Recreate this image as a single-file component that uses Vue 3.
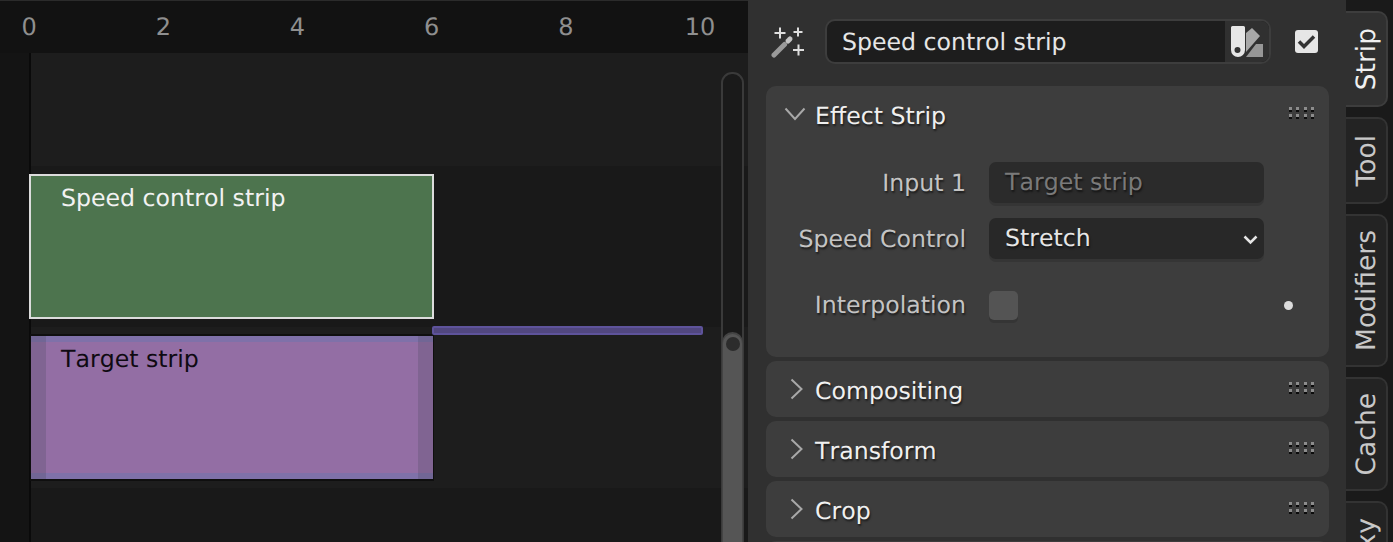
<template>
  <div class="app">
    <section class="timeline">
      <div class="ruler">
        <span v-for="n in ticks" :key="n" class="tick">{{ n }}</span>
      </div>
      <div class="body">
        <div class="gutter"></div>
        <div class="channels">
          <div class="band light first"></div>
          <div class="band dark"></div>
          <div class="band light"></div>
          <div class="band dark rest"></div>

          <div class="strip speed">Speed control strip</div>
          <div class="strip target">
            <i class="handle left"></i>
            <i class="handle right"></i>
            <span>Target strip</span>
          </div>
          <div class="retime"></div>
        </div>
        <div class="scroll">
          <div class="thumb"><i></i></div>
        </div>
      </div>
    </section>

    <section class="panel">
      <header class="head">
        <svg class="wand" width="34" height="34" viewBox="0 0 34 34">
          <path d="M3 30L13.500 19.500" stroke="#9a9a9a" stroke-width="5" stroke-linecap="round" />
          <path d="M17 16L19 14" stroke="#c4c4c4" stroke-width="5" stroke-linecap="round" />
          <path d="M3.500 8h11M9 2.500v11M22.500 7h9M27 2.500v9M22 25h11M27.500 19.500v11" stroke="#dedede" stroke-width="2" fill="none" />
        </svg>
        <div class="name">
          <span class="name-text">Speed control strip</span>
          <span class="name-btn">
            <svg width="33" height="33" viewBox="0 0 33 33">
              <path d="M0 2.500A1.500 1.500 0 0 1 1.500 1h11A1.500 1.500 0 0 1 14 2.500V25a7 7 0 0 1-14 0z" fill="#e6e6e6" />
              <circle cx="6.500" cy="25" r="3" fill="#333" />
              <path d="M15 8L21 3l8 8-7 8-7 8z" fill="#a8a8a8" />
              <path d="M25 19h7v13H15z" fill="#969696" />
            </svg>
          </span>
        </div>
        <div class="check on">
          <svg width="19" height="15" viewBox="0 0 19 15"><path d="M2 7.500l5 5 10-10" stroke="#333" stroke-width="3.500" fill="none" /></svg>
        </div>
      </header>

      <div class="card open">
        <div class="card-head">
          <svg class="chev-down" width="22" height="14" viewBox="0 0 22 14"><path d="M1.500 1.500L11 12l9.500-10.500" stroke="#a8a8a8" stroke-width="2" fill="none" /></svg>
          <span class="title">Effect Strip</span>
          <svg class="grip" width="25" height="12" viewBox="0 0 25 12">
            <g v-for="x in gripX" :key="x">
              <rect v-for="y in gripY" :key="y" :x="x" :y="y" width="3" height="3" fill="#8c8c8c" />
              <rect v-for="y in gripY" :key="'s' + y" :x="x" :y="y + 3" width="3" height="2" fill="#0c0c0c" />
            </g>
          </svg>
        </div>
        <div class="form">
          <label class="lbl">Input 1</label>
          <div class="field muted">Target strip</div>
          <label class="lbl">Speed Control</label>
          <div class="field select">
            Stretch
            <svg width="15" height="10" viewBox="0 0 15 10"><path d="M1.500 1.500l6 6 6-6" stroke="#e6e6e6" stroke-width="2.500" fill="none" /></svg>
          </div>
          <label class="lbl">Interpolation</label>
          <div class="interp-row">
            <div class="check off"></div>
            <i class="dot"></i>
          </div>
        </div>
      </div>

      <div v-for="c in closed" :key="c" class="card">
        <div class="card-head">
          <svg class="chev-right" width="13" height="22" viewBox="0 0 13 22"><path d="M1.500 1.500L11.500 11l-10 9.500" stroke="#a8a8a8" stroke-width="2" fill="none" /></svg>
          <span class="title">{{ c }}</span>
          <svg class="grip" width="25" height="12" viewBox="0 0 25 12">
            <g v-for="x in gripX" :key="x">
              <rect v-for="y in gripY" :key="y" :x="x" :y="y" width="3" height="3" fill="#8c8c8c" />
              <rect v-for="y in gripY" :key="'s' + y" :x="x" :y="y + 3" width="3" height="2" fill="#0c0c0c" />
            </g>
          </svg>
        </div>
      </div>
      <div class="card stub"></div>
    </section>

    <nav class="tabs">
      <div v-for="t in tabs" :key="t.label" class="tab" :class="{ active: t.active }" :style="{ height: t.h + 'px' }">
        <span>{{ t.label }}</span>
      </div>
    </nav>
  </div>
</template>

<script setup>
const ticks = [0, 2, 4, 6, 8, 10]
const closed = ['Compositing', 'Transform', 'Crop']
const gripX = [0, 7, 15, 22]
const gripY = [0, 7]
const tabs = [
  { label: 'Strip', h: 96, active: true },
  { label: 'Tool', h: 87 },
  { label: 'Modifiers', h: 153 },
  { label: 'Cache', h: 114 },
  { label: 'Proxy', h: 107 }
]
</script>

<style>
html,
body {
  margin: 0;
  overflow: hidden;
  background: #303030;
}
</style>

<style scoped>
.app {
  display: flex;
  width: 1393px;
  height: 542px;
  overflow: hidden;
  font-family: "DejaVu Sans", sans-serif;
  font-size: 23.65px;
  font-kerning: none;
  text-rendering: geometricPrecision;
}

/* timeline */
.timeline {
  width: 748px;
  display: flex;
  flex-direction: column;
  background: #191919;
}
.ruler {
  height: 52px;
  flex: none;
  display: flex;
  background: #121212;
  border-top: 1px solid #2b2b2b;
  overflow: hidden;
  color: #8f8f8f;
}
.tick {
  flex: none;
  width: 134.2px;
  line-height: 52px;
  text-align: center;
  font-size: 24px;
}
.tick:first-child {
  margin-left: -38px;
}
.body {
  flex: 1;
  display: flex;
  position: relative;
}
.gutter {
  width: 29px;
  background: #141414;
  border-right: 2px solid #0a0a0a;
  flex: none;
}
.channels {
  flex: 1;
  display: flex;
  flex-direction: column;
}
.band {
  height: 161px;
  flex: none;
}
.band.light {
  background: #1d1d1d;
}
.band.dark {
  background: #191919;
}
.band.first {
  height: 113px;
}
.band.rest {
  flex: 1;
}

/* strips sit on a free time/channel canvas */
.strip {
  position: absolute;
  box-sizing: border-box;
  padding-left: 30px;
}
.speed {
  left: 29px;
  top: 121px;
  width: 405px;
  height: 145px;
  background: #4d744e;
  border: 2px solid #dcdcdc;
  color: #f2f2f2;
  line-height: 44px;
}
.target {
  left: 30px;
  top: 281px;
  width: 404px;
  height: 147px;
  background: #936ea4;
  border: 1px solid #0f0f0f;
  border-top-width: 2px;
  border-bottom-width: 2px;
  color: #0f0a12;
  box-shadow: inset 0 6px 0 #7f71a9, inset 0 -6px 0 #7f71a9;
  line-height: 46px;
}
.target span {
  position: relative;
}
.handle {
  position: absolute;
  top: 0;
  bottom: 0;
  width: 15px;
  background: rgba(70, 70, 90, 0.25);
}
.handle.left {
  left: 0;
}
.handle.right {
  right: 0;
}
.retime {
  position: absolute;
  left: 432px;
  top: 273px;
  width: 271px;
  height: 9px;
  box-sizing: border-box;
  background: #51477f;
  border: 2px solid #5e539b;
  border-radius: 2px;
}

.scroll {
  position: absolute;
  left: 721px;
  top: 19px;
  bottom: -20px;
  width: 23px;
  box-sizing: border-box;
  border: 2px solid #3a3a3a;
  border-radius: 11px;
  background: #1a1a1a;
}
.thumb {
  position: absolute;
  left: 0;
  right: 0;
  top: 260px;
  bottom: 0;
  background: #555;
  border-radius: 10px;
  box-shadow: 0 -1px 0 1px #444;
  display: flex;
  justify-content: center;
  padding-top: 3px;
}
.thumb i {
  width: 14px;
  height: 14px;
  border-radius: 50%;
  background: #2c2c2c;
}

/* properties */
.panel {
  width: 598px;
  flex: none;
  background: #303030;
  box-sizing: border-box;
  padding: 19px 17px 0 18px;
  display: flex;
  flex-direction: column;
  gap: 4px;
  color: #e6e6e6;
  text-shadow: 1px 2px 2px rgba(0, 0, 0, 0.55);
}
.head {
  display: flex;
  align-items: center;
  height: 45px;
  margin-bottom: 18px;
  flex: none;
}
.wand {
  margin: 0 20px 0 5px;
  flex: none;
}
.name {
  width: 446px;
  height: 45px;
  box-sizing: border-box;
  display: flex;
  border: 2px solid #3d3d3d;
  border-radius: 10px;
  overflow: hidden;
  background: #1d1d1d;
  flex: none;
}
.name-text {
  flex: 1;
  padding-left: 15px;
  line-height: 43px;
  text-shadow: none;
}
.name-btn {
  width: 44px;
  background: #303030;
  border-left: 2px solid #1d1d1d;
  display: flex;
  align-items: center;
  justify-content: center;
}
.check {
  width: 23px;
  height: 23px;
  border-radius: 3px;
  display: flex;
  align-items: center;
  justify-content: center;
  flex: none;
}
.check.on {
  margin-left: 24px;
  background: #e6e6e6;
}
.check.off {
  width: 29px;
  height: 29px;
  border-radius: 5px;
  background: #545454;
  box-shadow: 0 3px 0 #353535;
}
.card {
  background: #3d3d3d;
  border-radius: 10px;
  flex: none;
}
.card.stub {
  height: 40px;
}
.card-head {
  height: 56px;
  display: flex;
  align-items: center;
  padding: 0 15px 0 18px;
}
.chev-down {
  margin-right: 9px;
  flex: none;
}
.chev-right {
  margin: 0 12px 0 6px;
  flex: none;
}
.title {
  flex: 1;
  padding-top: 4px;
  color: #f0f0f0;
}
.grip {
  margin-top: -2px;
}
.form {
  display: grid;
  grid-template-columns: 200px 275px;
  grid-template-rows: 41px 41px 62px;
  column-gap: 23px;
  row-gap: 15px;
  padding: 20px 0 21px;
  align-items: center;
}
.lbl {
  text-align: right;
  color: #c4c4c4;
}
.field {
  height: 41px;
  box-sizing: border-box;
  border-radius: 7px;
  padding-left: 16px;
  line-height: 41px;
  box-shadow: 0 3px 0 #353535;
}
.muted {
  background: #2b2b2b;
  color: #7a7a7a;
}
.select {
  background: #282828;
  display: flex;
  align-items: center;
  justify-content: space-between;
  padding-right: 6px;
}
.select svg {
  margin-top: 3px;
}
.interp-row {
  display: flex;
  align-items: center;
  justify-content: space-between;
  width: 304px;
}
.dot {
  width: 9px;
  height: 9px;
  border-radius: 50%;
  background: #dcdcdc;
}

/* tabs */
.tabs {
  flex: 1;
  background: #1a1a1a;
  padding-top: 11px;
  display: flex;
  flex-direction: column;
  gap: 10px;
  align-items: flex-start;
}
.tab {
  width: 42px;
  flex: none;
  box-sizing: border-box;
  background: #232323;
  border: 2px solid #333;
  border-left: none;
  border-radius: 0 10px 10px 0;
  display: flex;
  align-items: center;
  justify-content: center;
  color: #c8c8c8;
  font-size: 26.5px;
}
.tab span {
  writing-mode: vertical-rl;
  transform: rotate(180deg);
}
.tab.active {
  background: #303030;
  border-color: #3d3d3d;
  color: #f0f0f0;
}
</style>
